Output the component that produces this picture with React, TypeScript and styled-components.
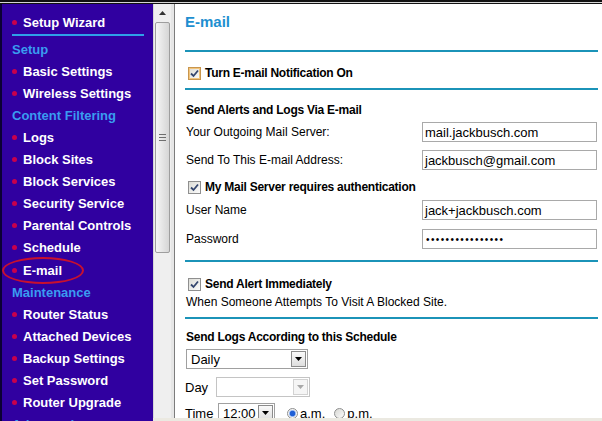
import styled, { createGlobalStyle } from 'styled-components';

const GlobalStyle = createGlobalStyle`
  html, body {
    margin: 0;
    padding: 0;
    background: #fff;
    overflow: hidden;
  }
  body {
    font-family: "Liberation Sans", Arial, sans-serif;
  }
`;

const Page = styled.div`
  width: 602px;
  height: 421px;
  display: flex;
  flex-direction: column;
  overflow: hidden;
`;

const TopRule = styled.div`
  height: 4px;
  flex: none;
  background: linear-gradient(#111 0 2px, #d4d4d4 2px 3px, #111 3px 4px);
`;

const Main = styled.div`
  flex: 1;
  display: flex;
  min-height: 0;
`;

/* ---------- left menu ---------- */

const Sidebar = styled.nav`
  width: 153px;
  flex: none;
  box-sizing: border-box;
  background: #3000a0;
  border-left: 2px solid #0c0034;
  padding-top: 7px;
  overflow: hidden;
`;

const NavItem = styled.div<{ $circled?: boolean }>`
  position: relative;
  height: 22.06px;
  display: flex;
  align-items: center;
  gap: 6px;
  padding-left: 10px;
  color: #fff;
  font-size: 13px;
  font-weight: bold;
  white-space: nowrap;

  &::before {
    content: '';
    width: 5px;
    height: 5px;
    border-radius: 50%;
    background: #c8004c;
    flex: none;
  }

  ${({ $circled }) =>
    $circled &&
    `
    &::after {
      content: '';
      position: absolute;
      left: 0;
      top: -2px;
      width: 78px;
      height: 23px;
      border: 2px solid #c8102e;
      border-radius: 50%;
    }
  `}
`;

const NavHeading = styled.div`
  height: 22.06px;
  display: flex;
  align-items: center;
  padding-left: 10px;
  color: #3a9cf0;
  font-size: 13px;
  font-weight: bold;
  white-space: nowrap;
`;

const NavRule = styled.div`
  height: 2px;
  margin: 1px 9px 2.5px 10px;
  background: #2f9fe8;
`;

/* ---------- frame scrollbar ---------- */

const RightPane = styled.div`
  flex: 1;
  display: flex;
  flex-direction: column;
  min-width: 0;
`;

const Frame = styled.div`
  flex: 1;
  display: flex;
  min-height: 0;
`;

const BottomStrip = styled.div`
  height: 3px;
  flex: none;
  background: #ebe9e1;
`;

const Scrollbar = styled.div`
  width: 18px;
  flex: none;
  box-sizing: border-box;
  background: #efefef;
  border-left: 1px solid #d6d6d6;
  padding: 0 1px;
  display: flex;
  flex-direction: column;
`;

const ArrowButton = styled.div`
  height: 18px;
  display: flex;
  align-items: center;
  justify-content: center;
`;

const Thumb = styled.div`
  height: 231px;
  box-sizing: border-box;
  border: 1px solid #9e9e9e;
  border-radius: 2px;
  background: linear-gradient(90deg, #f6f6f6, #e2e2e2 60%, #d6d6d6);
  display: flex;
  align-items: center;
  justify-content: center;
`;

const Grip = styled.div`
  width: 7px;
  height: 7px;
  background: repeating-linear-gradient(#6e6e6e 0 1px, transparent 1px 3px);
`;

const FrameEdge = styled.div`
  width: 4px;
  flex: none;
  box-sizing: border-box;
  background: #e6e6e6;
  border-right: 1px solid #7c7c7c;
`;

/* ---------- e-mail settings form ---------- */

const Content = styled.main`
  flex: 1;
  min-width: 0;
  padding: 0 4px 0 10px;
  display: flex;
  flex-direction: column;
  overflow: hidden;
  color: #000;
  font-size: 12px;
`;

const Title = styled.h1`
  margin: 0;
  height: 36px;
  line-height: 36px;
  font-size: 15px;
  font-weight: bold;
  color: #1e8fd0;
  flex: none;
`;

const Rule = styled.div<{ $mt: number }>`
  height: 2px;
  flex: none;
  margin-top: ${({ $mt }) => $mt}px;
  background: #1b93b8;
`;

const CheckRow = styled.label<{ $mt: number }>`
  height: 20px;
  flex: none;
  margin-top: ${({ $mt }) => $mt}px;
  padding-left: 3px;
  display: flex;
  align-items: center;
  gap: 4px;
  font-weight: bold;
  letter-spacing: -0.25px;
`;

const Box = styled.span<{ $focus?: boolean }>`
  width: 13px;
  height: 13px;
  box-sizing: border-box;
  flex: none;
  display: flex;
  align-items: center;
  justify-content: center;
  border: 1px solid ${({ $focus }) => ($focus ? '#c8964e' : '#8f8f8f')};
  background: linear-gradient(135deg, #dcdcd6, #fbfbfb);
  box-shadow: ${({ $focus }) => ($focus ? 'inset 0 0 0 1px #f2c47c' : 'none')};
`;

const SectionLabel = styled.div<{ $mt: number }>`
  height: 20px;
  flex: none;
  margin-top: ${({ $mt }) => $mt}px;
  padding-left: 1px;
  display: flex;
  align-items: center;
  font-weight: bold;
  letter-spacing: -0.25px;
  white-space: nowrap;
`;

const Note = styled.div`
  height: 16px;
  flex: none;
  padding-left: 1px;
  display: flex;
  align-items: center;
  white-space: nowrap;
`;

const FieldRow = styled.div<{ $mt: number }>`
  height: 20px;
  flex: none;
  margin-top: ${({ $mt }) => $mt}px;
  display: grid;
  grid-template-columns: 237px 175px;
  align-items: center;
`;

const FieldLabel = styled.span`
  padding-left: 1px;
  white-space: nowrap;
`;

const TextBox = styled.div`
  height: 20px;
  box-sizing: border-box;
  border: 1px solid #a9a9a9;
  padding: 0 2px;
  display: flex;
  align-items: center;
  font-size: 13px;
  white-space: nowrap;
  overflow: hidden;
`;

const Dots = styled.span`
  font-size: 10px;
  letter-spacing: 1.4px;
  padding-left: 1px;
`;

const InlineRow = styled.div<{ $mt: number }>`
  height: 20px;
  flex: none;
  margin-top: ${({ $mt }) => $mt}px;
  display: flex;
  align-items: center;
`;

const InlineLabel = styled.span<{ $w: number }>`
  width: ${({ $w }) => $w}px;
  flex: none;
  font-size: 13px;
`;

const Select = styled.div<{ $w: number; $disabled?: boolean; $ml?: number }>`
  width: ${({ $w }) => $w}px;
  height: 20px;
  margin-left: ${({ $ml }) => $ml ?? 0}px;
  box-sizing: border-box;
  flex: none;
  border: 1px solid ${({ $disabled }) => ($disabled ? '#c4c4c4' : '#a0a0a0')};
  background: #fff;
  display: flex;
  align-items: center;
  font-size: 13px;
  padding-left: 4px;
`;

const SelectText = styled.span`
  flex: 1;
`;

const DropButton = styled.span<{ $disabled?: boolean }>`
  width: 15px;
  height: 16px;
  margin-right: 1px;
  box-sizing: border-box;
  border: 1px solid ${({ $disabled }) => ($disabled ? '#d2d2d2' : '#8c8c8c')};
  background: ${({ $disabled }) =>
    $disabled ? '#f5f5f5' : 'linear-gradient(#fafafa, #dedede)'};
  display: flex;
  align-items: center;
  justify-content: center;
`;

const Radio = styled.span<{ $checked?: boolean; $ml: number }>`
  width: 11px;
  height: 11px;
  margin-left: ${({ $ml }) => $ml}px;
  margin-right: 2px;
  box-sizing: border-box;
  border-radius: 50%;
  flex: none;
  border: 1px solid #8e8f8f;
  background: ${({ $checked }) =>
    $checked
      ? 'radial-gradient(circle, #1f5fd6 0 2.5px, #8fb3f0 3px, #f4f4f4 4px)'
      : 'linear-gradient(135deg, #d8d8d4, #fbfbfb)'};
`;

const RadioText = styled.span`
  font-size: 13px;
`;

const Check = () => (
  <svg width="9" height="9" viewBox="0 0 9 9">
    <path d="M1 4.5 L3.5 7 L8 1.5" fill="none" stroke="#34466e" strokeWidth="1.8" />
  </svg>
);

const Caret = ({ color }: { color: string }) => (
  <svg width="7" height="4" viewBox="0 0 7 4">
    <path d="M0 0 H7 L3.5 4 Z" fill={color} />
  </svg>
);

const setupItems = ['Basic Settings', 'Wireless Settings'];
const filterItems = [
  'Logs',
  'Block Sites',
  'Block Services',
  'Security Service',
  'Parental Controls',
  'Schedule',
  'E-mail',
];
const maintenanceItems = [
  'Router Status',
  'Attached Devices',
  'Backup Settings',
  'Set Password',
  'Router Upgrade',
];

export default function App() {
  return (
    <>
      <GlobalStyle />
      <Page>
        <TopRule />
        <Main>
          <Sidebar>
            <NavItem>Setup Wizard</NavItem>
            <NavRule />
            <NavHeading>Setup</NavHeading>
            {setupItems.map((l) => (
              <NavItem key={l}>{l}</NavItem>
            ))}
            <NavHeading>Content Filtering</NavHeading>
            {filterItems.map((l) => (
              <NavItem key={l} $circled={l === 'E-mail'}>
                {l}
              </NavItem>
            ))}
            <NavHeading>Maintenance</NavHeading>
            {maintenanceItems.map((l) => (
              <NavItem key={l}>{l}</NavItem>
            ))}
            <NavHeading>Advanced</NavHeading>
          </Sidebar>

          <RightPane>
            <Frame>
              <Scrollbar>
                <ArrowButton>
                  <svg width="7" height="4" viewBox="0 0 7 4">
                    <path d="M0 4 H7 L3.5 0 Z" fill="#333" />
                  </svg>
                </ArrowButton>
                <Thumb>
                  <Grip />
                </Thumb>
              </Scrollbar>
              <FrameEdge />

              <Content>
                <Title>E-mail</Title>
                <Rule $mt={10} />
                <CheckRow $mt={11}>
                  <Box $focus>
                    <Check />
                  </Box>
                  Turn E-mail Notification On
                </CheckRow>
                <Rule $mt={5} />

                <SectionLabel $mt={10}>Send Alerts and Logs Via E-mail</SectionLabel>
                <FieldRow $mt={2}>
                  <FieldLabel>Your Outgoing Mail Server:</FieldLabel>
                  <TextBox>mail.jackbusch.com</TextBox>
                </FieldRow>
                <FieldRow $mt={8}>
                  <FieldLabel>Send To This E-mail Address:</FieldLabel>
                  <TextBox>jackbusch@gmail.com</TextBox>
                </FieldRow>
                <CheckRow $mt={7}>
                  <Box>
                    <Check />
                  </Box>
                  My Mail Server requires authentication
                </CheckRow>
                <FieldRow $mt={3}>
                  <FieldLabel>User Name</FieldLabel>
                  <TextBox>jack+jackbusch.com</TextBox>
                </FieldRow>
                <FieldRow $mt={9}>
                  <FieldLabel>Password</FieldLabel>
                  <TextBox>
                    <Dots>{'•'.repeat(16)}</Dots>
                  </TextBox>
                </FieldRow>
                <Rule $mt={11} />

                <CheckRow $mt={12}>
                  <Box>
                    <Check />
                  </Box>
                  Send Alert Immediately
                </CheckRow>
                <Note>When Someone Attempts To Visit A Blocked Site.</Note>
                <Rule $mt={7} />

                <SectionLabel $mt={8}>Send Logs According to this Schedule</SectionLabel>
                <InlineRow $mt={2}>
                  <Select $w={122} $ml={1}>
                    <SelectText>Daily</SelectText>
                    <DropButton>
                      <Caret color="#000" />
                    </DropButton>
                  </Select>
                </InlineRow>
                <InlineRow $mt={8}>
                  <InlineLabel $w={31}>Day</InlineLabel>
                  <Select $w={94} $disabled>
                    <SelectText />
                    <DropButton $disabled>
                      <Caret color="#a8a8a8" />
                    </DropButton>
                  </Select>
                </InlineRow>
                <InlineRow $mt={6}>
                  <InlineLabel $w={33}>Time</InlineLabel>
                  <Select $w={57}>
                    <SelectText>12:00</SelectText>
                    <DropButton>
                      <Caret color="#000" />
                    </DropButton>
                  </Select>
                  <Radio $checked $ml={12} />
                  <RadioText>a.m.</RadioText>
                  <Radio $ml={9} />
                  <RadioText>p.m.</RadioText>
                </InlineRow>
              </Content>
            </Frame>
            <BottomStrip />
          </RightPane>
        </Main>
      </Page>
    </>
  );
}
